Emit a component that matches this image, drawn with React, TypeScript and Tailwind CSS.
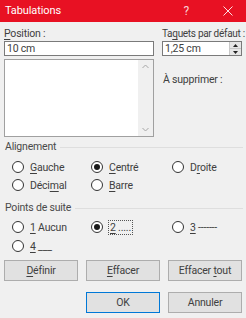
import React from "react";

const U = ({ children }: { children: React.ReactNode }) => (
  <span className="underline underline-offset-2 decoration-[1px]">{children}</span>
);

function Radio({ checked, children, focus }: { checked?: boolean; children: React.ReactNode; focus?: boolean }) {
  return (
    <div className="flex items-center gap-[6px] h-[14px]">
      <div className="w-[12px] h-[12px] rounded-full border border-[#333] bg-white flex items-center justify-center shrink-0">
        {checked && <div className="w-[6px] h-[6px] rounded-full bg-[#1a1a1a]" />}
      </div>
      <span className={focus ? "outline outline-1 outline-dotted outline-[#555] px-[1px] leading-[13px]" : "leading-[13px]"}>{children}</span>
    </div>
  );
}

function Btn({ children, primary }: { children: React.ReactNode; primary?: boolean }) {
  return (
    <div
      className={
        "w-[74px] h-[21px] flex items-center justify-center bg-[#e1e1e1] border " +
        (primary ? "border-[#0078d7]" : "border-[#adadad]")
      }
    >
      <span>{children}</span>
    </div>
  );
}

export default function App() {
  return (
    <div
      className="w-[246px] h-[320px] bg-[#f0f0f0] flex flex-col text-[10.5px] tracking-[-0.2px] text-[#404040] overflow-hidden"
      style={{ fontFamily: 'Roboto, "Segoe UI", sans-serif' }}
    >
      {/* Title bar */}
      <div className="h-[22px] bg-[#e81123] flex items-center text-white shrink-0">
        <span className="ml-[5px] text-[11px] tracking-[-0.1px] flex-1">Tabulations</span>
        <span className="text-[12px] mr-[34px] text-[#f8d0d3]">?</span>
        <svg width="10" height="10" viewBox="0 0 10 10" className="mr-[13px]">
          <path d="M0.5 0.5L9.5 9.5M9.5 0.5L0.5 9.5" stroke="#fbe0e2" strokeWidth="1" />
        </svg>
      </div>

      {/* Top section */}
      <div className="flex px-[4px] mt-[4px]">
        <div className="w-[150px] flex flex-col">
          <div className="h-[15px] leading-[15px]">
            <U>P</U>osition :
          </div>
          <div className="h-[15px] bg-white border border-[#7a7a7a] flex items-center px-[2px]">10 cm</div>
          <div className="mt-[3px] h-[78px] bg-white border border-[#a0a0a0] flex">
            <div className="flex-1" />
            <div className="w-[15px] bg-[#f0f0f0] flex flex-col items-center justify-between py-[4px]">
              <svg width="7" height="5" viewBox="0 0 7 5">
                <path d="M0.5 4L3.5 1L6.5 4" stroke="#a6a6a6" fill="none" strokeWidth="1" />
              </svg>
              <svg width="7" height="5" viewBox="0 0 7 5">
                <path d="M0.5 1L3.5 4L6.5 1" stroke="#a6a6a6" fill="none" strokeWidth="1" />
              </svg>
            </div>
          </div>
        </div>
        <div className="ml-[8px] w-[80px] flex flex-col">
          <div className="h-[15px] leading-[15px] whitespace-nowrap text-[10px] tracking-[-0.3px]">
            Ta<U>q</U>uets par défaut :
          </div>
          <div className="h-[15px] bg-white border border-[#7a7a7a] flex items-center">
            <span className="flex-1 px-[2px]">1,25 cm</span>
            <div className="w-[12px] h-full flex flex-col border-l border-[#c8c8c8]">
              <div className="flex-1 bg-[#e6e6e6] flex items-center justify-center border-b border-[#c8c8c8]">
                <svg width="5" height="3" viewBox="0 0 5 3"><path d="M0 3L2.5 0L5 3Z" fill="#222" /></svg>
              </div>
              <div className="flex-1 bg-[#e6e6e6] flex items-center justify-center">
                <svg width="5" height="3" viewBox="0 0 5 3"><path d="M0 0L2.5 3L5 0Z" fill="#222" /></svg>
              </div>
            </div>
          </div>
          <div className="mt-[16px] h-[15px] leading-[15px] pl-[1px]">À supprimer :</div>
        </div>
      </div>

      {/* Alignement */}
      <div className="flex items-center px-[5px] mt-[3px] h-[14px]">
        <span className="text-[#4a4a4a]">Alignement</span>
        <div className="flex-1 h-px bg-[#dedede] ml-[4px] mr-[-2px]" />
      </div>
      <div className="grid grid-cols-[79px_81px_1fr] pl-[12px] mt-[6px] gap-y-[4px]">
        <Radio><U>G</U>auche</Radio>
        <Radio checked><U>C</U>entré</Radio>
        <Radio>D<U>r</U>oite</Radio>
        <Radio>Déci<U>m</U>al</Radio>
        <Radio><U>B</U>arre</Radio>
      </div>

      {/* Points de suite */}
      <div className="flex items-center px-[5px] mt-[9px] h-[14px]">
        <span className="text-[#4a4a4a]">Points de suite</span>
        <div className="flex-1 h-px bg-[#dedede] ml-[4px] mr-[-2px]" />
      </div>
      <div className="grid grid-cols-[79px_81px_1fr] pl-[12px] mt-[5px] gap-y-[5px]">
        <Radio><U>1</U> Aucun</Radio>
        <Radio checked focus><U>2</U> .....</Radio>
        <Radio><U>3</U> -------</Radio>
        <Radio><U>4</U> ___</Radio>
      </div>

      {/* Buttons */}
      <div className="flex px-[4px] gap-[8px] mt-[7px]">
        <Btn><U>D</U>éfinir</Btn>
        <Btn><U>E</U>ffacer</Btn>
        <Btn>Effacer <U>t</U>out</Btn>
      </div>
      <div className="flex justify-end pr-[4px] gap-[8px] mt-[11px]">
        <Btn primary>OK</Btn>
        <Btn>Annuler</Btn>
      </div>
      <div className="flex-1" />
      <div className="h-[2px] bg-[#f6c9cc]" />
    </div>
  );
}
